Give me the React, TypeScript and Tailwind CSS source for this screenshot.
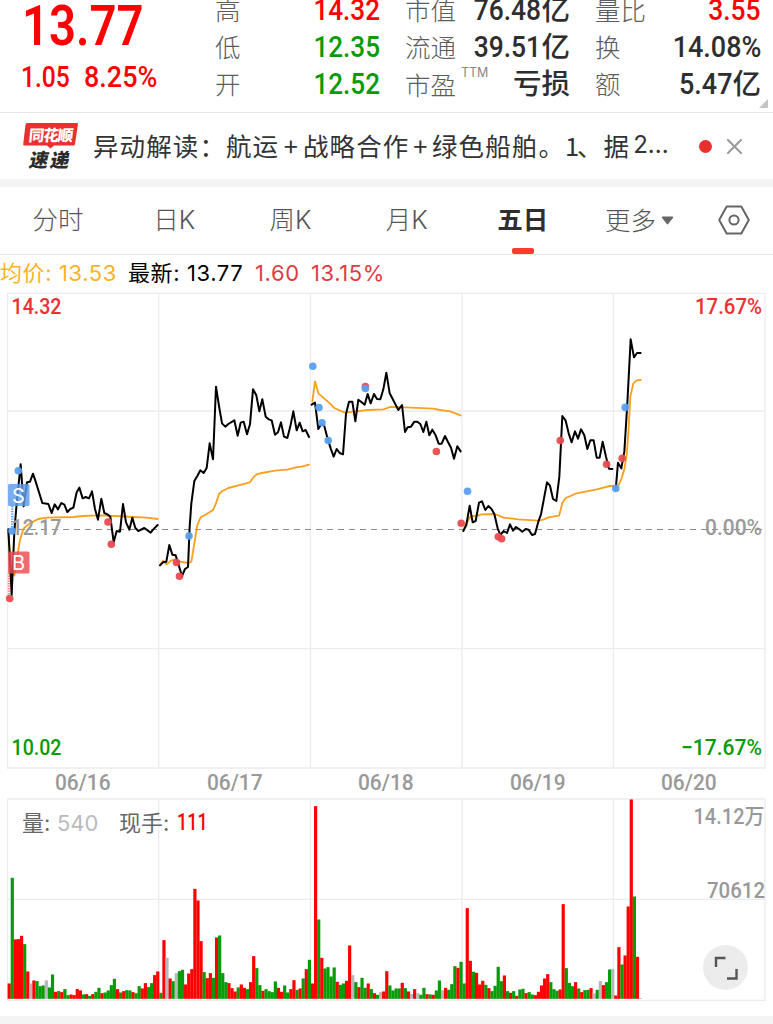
import type { ReactNode } from "react";
import clsx from "clsx";

const RED = "#ff0000";
const GREEN = "#079b07";
const DOT_RED = "#e94b4f";
const DOT_BLUE = "#5b9ff0";

// Points are stored at three times the drawn size, relative to each session's origin
const sessions = [
  {
    x: 0,
    y: 285,
    average:
      "25,740 33,850 43,872 50,825 60,765 70,732 80,722 95,712 115,702 140,698 220,696 250,693 300,691 345,693 400,696 440,698 473,702",
    price:
      "25,733 30,830 35,930 43,740 50,655 62,538 71,664 81,592 90,590 99,566 108,593 127,654 145,657 155,684 164,658 174,673 184,654 193,659 202,681 211,672 220,668 230,622 238,608 248,640 257,636 267,640 276,619 285,672 294,704 304,641 313,684 322,688 331,695 341,772 350,738 360,740 369,657 378,712 388,734 397,698 406,729 415,738 433,729 452,743 462,731 473,720",
  },
  {
    x: 155,
    y: 370,
    average:
      "15,584 25,572 35,583 48,572 60,568 80,576 100,579 109,575 118,520 127,465 137,442 155,432 174,420 183,400 192,372 202,363 220,354 285,337 295,322 305,313 320,309 360,302 400,298 420,293 440,290 462,284",
    price:
      "15,586 24,577 34,575 43,525 52,554 62,556 71,585 81,618 90,597 99,591 104,470 109,400 118,333 127,318 136,301 146,309 155,294 164,220 174,268 183,50 192,108 201,160 211,170 220,162 238,151 248,197 257,158 266,155 276,193 285,163 294,58 304,76 313,124 322,88 332,140 341,148 350,151 360,194 369,187 378,157 387,200 397,204 406,169 415,124 425,181 434,158 443,184 452,180 462,201",
  },
  {
    x: 305,
    y: 350,
    average:
      "22,155 30,94 40,130 58,146 72,158 88,174 105,182 120,188 150,184 190,180 235,178 255,171 300,172 385,176 405,180 435,184 467,196",
    price:
      "20,164 30,158 40,237 49,222 58,228 67,263 77,295 86,320 95,297 104,309 114,313 123,192 132,155 142,155 151,214 160,149 170,157 179,164 188,132 197,160 207,132 216,147 226,148 235,118 244,68 254,130 263,147 280,180 291,165 300,246 308,232 318,230 328,215 337,215 346,222 355,246 364,215 373,256 382,239 391,254 401,281 410,281 420,258 429,276 438,293 447,326 457,289 467,304",
  },
  {
    x: 455,
    y: 330,
    average:
      "25,600 35,578 46,560 70,556 80,553 115,552 130,556 145,563 190,568 250,572 265,569 280,562 312,557 317,540 322,518 332,504 365,490 395,484 425,478 465,468 476,468",
    price:
      "25,603 34,585 44,527 53,577 62,573 72,518 81,514 91,540 100,528 109,536 118,552 128,595 136,615 146,603 156,609 165,583 174,602 183,591 192,597 202,605 212,597 221,599 231,615 240,612 250,575 258,553 276,457 285,467 294,507 304,513 313,440 322,258 332,272 341,310 350,337 360,304 369,326 378,298 388,316 397,357 406,331 416,331 425,383 434,383 443,335 453,380 462,416 472,417",
  },
  {
    x: 455,
    y: 330,
    average:
      "482,472 490,466 500,445 508,418 515,375 520,310 526,200 535,160 545,151 557,150",
    price:
      "482,480 489,398 499,415 508,365 517,220 527,28 537,82 546,69 557,69",
  },
];

const dots: [number, number, string][] = [
  [18.3, 470.7, DOT_BLUE],
  [12, 531, DOT_BLUE],
  [9.7, 598.5, DOT_RED],
  [108, 522, DOT_RED],
  [111.3, 544.3, DOT_RED],
  [189, 536, DOT_BLUE],
  [176.5, 562.5, DOT_RED],
  [179.5, 576.3, DOT_RED],
  [312.8, 366.2, DOT_BLUE],
  [319, 407.5, DOT_BLUE],
  [322, 422.8, DOT_BLUE],
  [328.2, 440.5, DOT_BLUE],
  [365.4, 386.5, DOT_RED],
  [365.4, 388.5, DOT_BLUE],
  [436.4, 451.5, DOT_RED],
  [461.2, 523.3, DOT_RED],
  [467.5, 491.3, DOT_BLUE],
  [498.3, 536.8, DOT_RED],
  [501.6, 538.8, DOT_RED],
  [560.3, 440.5, DOT_RED],
  [606.6, 464.3, DOT_RED],
  [615.8, 488.4, DOT_BLUE],
  [622.2, 458.2, DOT_RED],
  [625.2, 407.4, DOT_BLUE],
];

// r = up, g = down, x = flat, followed by the bar height in thirds of a pixel
const volume = (
  "r46 g363 r178 r179 r189 g164 r82 x46 r55 g53 g38 g40 x55 g34 g73 r21 g23 r20 g29 g11 r13 r11 r29 r25 g13 r14 g9 r14 g21 g33 " +
  "r17 g19 g25 g41 g60 r29 g19 r23 g26 g25 r20 g17 g38 r31 r47 g35 g47 r71 r82 g18 r176 x123 r61 g53 x77 g83 g87 r43 r76 r89 " +
  "r330 r295 r173 g80 r62 r77 g63 r184 g190 g77 g50 r47 r32 r22 g34 r43 r33 g29 r50 r128 g92 g41 r24 g29 g23 g20 g52 r33 r21 g40 " +
  "g19 r29 r56 g27 r31 g61 r89 g117 r46 r578 g238 r123 g91 g95 g67 g94 r51 g42 g46 r54 r160 x71 g50 r35 g63 g33 r46 g29 r17 g12 " +
  "x20 r22 r83 g40 g25 g31 g31 r48 g32 r22 x15 r29 x17 g12 g33 r14 g13 r12 g25 g55 x26 r33 g27 g44 g98 r93 g111 g46 r272 r114 " +
  "g81 r78 r43 r54 g42 r32 g23 g39 g96 g53 r70 g23 r18 g23 r9 g28 g30 r17 g20 g13 r11 r21 r40 r61 r74 g50 g29 g24 r28 r284 " +
  "g92 g48 g38 r50 g31 r20 g26 g27 r32 x16 g27 x53 r41 g50 g88 x89 r10 r155 g103 r130 r277 r598 g307 r126 x2"
).split(" ");

const barColors: Record<string, string> = { r: RED, g: GREEN, x: "#b8b8b8" };

const dates = ["06/16", "06/17", "06/18", "06/19", "06/20"];

function Num({
  children,
  className,
}: {
  children: ReactNode;
  className?: string;
}) {
  return (
    <span
      className={clsx(
        "inline-block whitespace-nowrap font-[Roboto] font-medium",
        className,
      )}
    >
      {children}
    </span>
  );
}

function Quote({
  label,
  sup,
  children,
}: {
  label: string;
  sup?: string;
  children: ReactNode;
}) {
  return (
    <div className="flex h-[37px] items-center justify-between whitespace-nowrap">
      <span
        className={clsx(
          "flex text-[25.5px] leading-[37px] font-light text-[#5c5c5c]",
          sup ? "pb-[2px]" : "pb-[5px]",
        )}
      >
        {label}
        {sup && (
          <sup className="top-0 ml-[5px] font-[Inter] text-[12.5px] leading-4 font-normal tracking-[-0.1px] text-[#888]">
            {sup}
          </sup>
        )}
      </span>
      <span className="flex items-center text-[28.5px] leading-[37px] font-medium text-[#2e2e30]">
        {children}
      </span>
    </div>
  );
}

function Unit({ children }: { children: string }) {
  return <span className="pb-[6px]">{children}</span>;
}

function QuoteHeader() {
  return (
    <header className="relative flex h-[113px] overflow-hidden border-b border-[#e8e8e8]">
      <div className="w-[215px] shrink-0 pl-[21px] text-[#ff0000]">
        <div className="h-[52px]">
          <Num className="ml-px origin-left scale-x-[0.86] text-[55px] leading-[53px] font-semibold">
            13.77
          </Num>
        </div>
        <div className="flex h-[50px] items-center pt-[2px]">
          <Num className="w-[62px] origin-left scale-x-[0.85] text-[29px]">
            1.05
          </Num>
          <Num className="ml-px origin-left scale-x-[0.93] text-[29px]">
            8.25%
          </Num>
        </div>
      </div>
      <div className="-mt-2 w-[165px] shrink-0">
        <Quote label="高">
          <Num className="origin-right scale-x-[0.9] text-[29px] text-[#ff0000]">
            14.32
          </Num>
        </Quote>
        <Quote label="低">
          <Num className="origin-right scale-x-[0.9] text-[29px] text-[#079b07]">
            12.35
          </Num>
        </Quote>
        <Quote label="开">
          <Num className="origin-right scale-x-[0.9] text-[29px] text-[#079b07]">
            12.52
          </Num>
        </Quote>
      </div>
      <div className="-mt-2 ml-[25px] w-[165px] shrink-0">
        <Quote label="市值">
          <Num className="origin-right scale-x-[0.91] text-[29px]">76.48</Num>
          <Unit>亿</Unit>
        </Quote>
        <Quote label="流通">
          <Num className="origin-right scale-x-[0.91] text-[29px]">39.51</Num>
          <Unit>亿</Unit>
        </Quote>
        <Quote label="市盈" sup="TTM">
          <Unit>亏损</Unit>
        </Quote>
      </div>
      <div className="-mt-2 ml-[25px] w-[166px] shrink-0">
        <Quote label="量比">
          <Num className="origin-right scale-x-[0.91] text-[29px] text-[#ff0000]">
            3.55
          </Num>
        </Quote>
        <Quote label="换">
          <Num className="origin-right scale-x-[0.93] text-[29px]">14.08%</Num>
        </Quote>
        <Quote label="额">
          <Num className="origin-right scale-x-[0.93] text-[29px]">5.47</Num>
          <Unit>亿</Unit>
        </Quote>
      </div>
      <svg
        className="absolute right-[5px] bottom-[4px]"
        width="9"
        height="9"
        viewBox="0 0 9 9"
      >
        <path d="M9 0v9H0z" fill="#c4c4c4" />
      </svg>
    </header>
  );
}

function NewsLogo() {
  return (
    <div className="relative h-12 w-[55px] shrink-0 whitespace-nowrap">
      <svg className="absolute inset-0" width="55" height="48" viewBox="0 0 55 48">
        <path
          d="M4 1h50a1 1 0 0 1 1 1l-3 20a1.500 1.500 0 0 1-1.500 1.500H31l-3.500 3-3.500-3H1.200a1 1 0 0 1-1-1L2.500 2.500A1.500 1.500 0 0 1 4 1z"
          fill="#e9302f"
        />
      </svg>
      <span className="absolute top-1 left-[6px] -skew-x-6 text-[15.5px] leading-4 font-black tracking-[-1px] text-white">
        同花顺
      </span>
      <span className="absolute top-[27px] left-[7px] -skew-x-12 text-[19px] leading-[19px] font-black tracking-[2px] text-[#2b2b2b]">
        速递
      </span>
    </div>
  );
}

function NewsBar() {
  return (
    <div className="flex h-[66px] items-center pl-[23px]">
      <NewsLogo />
      <p className="ml-[15px] flex w-[604px] pb-[3px] text-[25.5px] leading-9 tracking-[1.1px] whitespace-nowrap text-[#333]">
        <span className="w-[187px]">异动解读：航运</span>
        <span className="w-[23px] text-center">+</span>
        <span className="w-[107px]">战略合作</span>
        <span className="w-[22px] text-center">+</span>
        <span className="w-[133px]">绿色船舶。</span>
        <span className="w-[12px] tracking-[-3px]">1</span>
        <span>、据</span>
        <span className="ml-[3px] font-[Inter] text-[24px] tracking-normal">
          2...
        </span>
      </p>
      <span className="ml-[1.500px] size-[13px] rounded-full bg-[#e9302f]" />
      <svg className="ml-[15px]" width="15" height="15" viewBox="0 0 15 15">
        <path
          d="M1 1l13 13M14 1L1 14"
          stroke="#999"
          strokeWidth="2"
          strokeLinecap="round"
        />
      </svg>
    </div>
  );
}

function PeriodTabs() {
  const tabs = ["分时", "日K", "周K", "月K", "五日"];
  return (
    <nav className="flex h-[68px] border-b border-[#e8e8e8] font-[Inter,'Noto_Sans_CJK_SC',sans-serif] text-[25.5px] leading-[66px] font-light text-[#555]">
      {tabs.map((tab) => (
        <div
          key={tab}
          className={clsx(
            "relative w-[116.2px] text-center",
            tab === "五日" && "font-bold text-[#2e2e30]",
          )}
        >
          {tab}
          {tab === "五日" && (
            <span className="absolute bottom-0 left-1/2 h-1.5 w-[22px] -translate-x-1/2 rounded-[2px] bg-[#ff3b30]" />
          )}
        </div>
      ))}
      <div className="ml-6 flex items-center">
        更多
        <svg className="ml-[5px]" width="13" height="9" viewBox="0 0 13 9">
          <path
            d="M1.500.5h10a.8.8 0 0 1 .6 1.300L7.200 8a.9.9 0 0 1-1.400 0L.9 1.800A.8.8 0 0 1 1.500.5z"
            fill="#666"
          />
        </svg>
      </div>
      <svg
        className="mt-[18px] ml-[44px]"
        width="32"
        height="30"
        viewBox="0 0 32 30"
      >
        <g fill="none" stroke="#666" strokeWidth="2" strokeLinejoin="round">
          <path d="M8.700 1.500h14.600L30.800 15l-7.500 13.500H8.700L1.200 15z" />
          <circle cx="16" cy="15" r="4.600" />
        </g>
      </svg>
    </nav>
  );
}

function PriceLegend() {
  return (
    <div className="flex h-[37px] items-center font-[Inter,'Noto_Sans_CJK_SC',sans-serif] text-[22px] leading-[37px] tracking-[0.6px] whitespace-nowrap text-[#e23b3f]">
      <span className="w-[128px] text-[#fcb322]">均价: 13.53</span>
      <span className="w-[127px] text-black">最新: 13.77</span>
      <span className="w-[56px]">1.60</span>
      <span>13.15%</span>
    </div>
  );
}

type LabelProps = {
  x: number;
  y: number;
  width: number;
  fill: string;
  children: string;
};

function AxisLabel({ x, y, width, fill, children }: LabelProps) {
  return (
    <text
      x={x}
      y={y}
      fill={fill}
      textLength={width}
      lengthAdjust="spacingAndGlyphs"
      className="font-[Roboto,'Noto_Sans_CJK_SC',sans-serif] text-[22px] font-medium"
    >
      {children}
    </text>
  );
}

function PriceChart() {
  return (
    <svg
      className="block"
      width="773"
      height="477"
      viewBox="0 292 773 477"
      fill="none"
    >
      <g stroke="#ececec" strokeWidth="1.300">
        <path d="M7.500 293.300H765V768H7.500z" />
        <path d="M7.500 411H765M7.500 648.700H765M158.700 293V768M310.400 293V768M461.900 293V768M613.400 293V768" />
      </g>
      <path
        d="M8 529.500H765"
        stroke="#8c8c8c"
        strokeWidth="1"
        strokeDasharray="6 5"
      />
      {sessions.map((s, i) => (
        <g
          key={i}
          transform={`translate(${s.x} ${s.y}) scale(${1 / 3})`}
          strokeLinejoin="round"
          strokeLinecap="round"
        >
          <polyline points={s.average} stroke="#f9a11f" strokeWidth="5.500" />
          <polyline points={s.price} stroke="#000" strokeWidth="6" />
        </g>
      ))}
      <AxisLabel x={11.500} y={314} width={50} fill="#ec3033">14.32</AxisLabel>
      <AxisLabel x={695} y={314} width={67} fill="#ec3033">17.67%</AxisLabel>
      <AxisLabel x={11.500} y={535} width={50} fill="#999">12.17</AxisLabel>
      <AxisLabel x={705} y={535} width={57} fill="#999">0.00%</AxisLabel>
      <AxisLabel x={11.500} y={755} width={50} fill={GREEN}>10.02</AxisLabel>
      <AxisLabel x={681} y={755} width={81} fill={GREEN}>−17.67%</AxisLabel>
      {dots.map(([cx, cy, fill], i) => (
        <circle key={i} cx={cx} cy={cy} r="3.800" fill={fill} fillOpacity="0.95" />
      ))}
      <path d="M12.300 506V528" stroke={DOT_BLUE} strokeWidth="2.500" strokeDasharray="1.200 1.300" />
      <path d="M9 573V596" stroke={DOT_RED} strokeWidth="2.500" strokeDasharray="1.200 1.300" strokeOpacity="0.7" />
      <rect x="8" y="484" width="21.500" height="22" rx="1.500" fill="#5b9bec" fillOpacity="0.82" />
      <rect x="8" y="551.500" width="21.500" height="22" rx="1.500" fill="#ea4b50" fillOpacity="0.82" />
      <g
        fill="#fff"
        textAnchor="middle"
        className="font-[Inter] text-[20px]"
      >
        <text x="18.300" y="502.500">S</text>
        <text x="18.600" y="569.800">B</text>
      </g>
    </svg>
  );
}

function DateAxis() {
  return (
    <div className="ml-[7px] grid h-[29px] w-[758px] grid-cols-5 text-center text-[22px] leading-[28px] text-[#999]">
      {dates.map((date) => (
        <Num key={date} className="scale-x-[0.95]">
          {date}
        </Num>
      ))}
    </div>
  );
}

function VolumeChart() {
  return (
    <div className="relative">
      <svg
        className="block"
        width="773"
        height="204"
        viewBox="0 798 773 204"
        fill="none"
      >
        <g stroke="#ececec" strokeWidth="1.300">
          <path d="M7.500 799H765V1000.300H7.500z" />
          <path d="M7.500 899.400H765M158.700 799V1000M310.400 799V1000M461.900 799V1000M613.400 799V1000" />
        </g>
        {volume.map((bar, i) => {
          const height = Number(bar.slice(1)) / 3;
          return (
            <rect
              key={i}
              x={7.600 + i * 3.095}
              y={998.800 - height}
              width="3.200"
              height={height}
              fill={barColors[bar[0]]}
            />
          );
        })}
        <AxisLabel x={693.500} y={823.500} width={71} fill="#999">14.12万</AxisLabel>
        <AxisLabel x={707} y={898} width={58} fill="#999">70612</AxisLabel>
      </svg>
      <div className="absolute top-[9px] left-[22px] flex font-[Inter,'Noto_Sans_CJK_SC',sans-serif] text-[22px] leading-8 whitespace-nowrap text-[#666]">
        <span className="w-[35px]">量:</span>
        <span className="w-[62px] text-[#bbb]">540</span>
        <span className="w-[58px]">现手:</span>
        <Num className="origin-left scale-x-[0.78] text-[23px] text-[#ff0000]">111</Num>
      </div>
      <button className="absolute top-[147px] left-[703px] flex size-[45px] items-center justify-center rounded-full bg-[#ececec]">
        <svg width="24" height="24" viewBox="0 0 24 24" fill="none">
          <path
            d="M2 11V2h9.500M22.500 13v9.500H13"
            stroke="#555"
            strokeWidth="2.400"
          />
        </svg>
      </button>
    </div>
  );
}

export default function App() {
  return (
    <main className="h-[1024px] w-[773px] overflow-hidden bg-white font-['Noto_Sans_CJK_SC',sans-serif]">
      <QuoteHeader />
      <NewsBar />
      <div className="h-2 bg-[#f4f4f4]" />
      <PeriodTabs />
      <PriceLegend />
      <PriceChart />
      <DateAxis />
      <VolumeChart />
      <div className="mt-[14px] h-2 bg-[#f4f4f4]" />
    </main>
  );
}
